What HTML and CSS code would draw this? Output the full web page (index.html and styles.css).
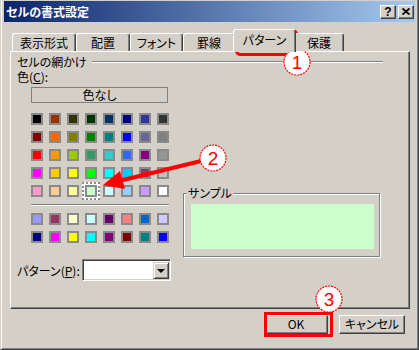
FILE: index.html
```html
<!DOCTYPE html>
<html>
<head>
    <meta charset="utf-8">
    <link rel="stylesheet" href="styles.css">
</head>
<body>
    <div class="window">
        <div class="titlebar">
            <span class="title">セルの書式設定</span>
            <div class="caption-btns">
                <span class="cbtn help">?</span>
                <span class="cbtn">
                    <svg width="8" height="7" viewBox="0 0 8 7"><path d="M0.5 0.5 L7.5 6.5 M7.5 0.5 L0.5 6.5" stroke="#000" stroke-width="1.8"/></svg>
                </span>
            </div>
        </div>

        <div class="content">
            <div class="tabs">
                <div class="tab tab-format">表示形式</div>
                <div class="tab tab-align">配置</div>
                <div class="tab tab-font">フォント</div>
                <div class="tab tab-border">罫線</div>
                <div class="tab tab-pattern active">パターン</div>
                <div class="tab tab-protect">保護</div>
            </div>

            <div class="panel">
                <div class="group-head">
                    <span>セルの網かけ</span>
                    <span class="rule"></span>
                </div>
                <div class="color-label">色(<u>C</u>):</div>

                <div class="row">
                    <div class="palettes">
                        <div class="none-btn">色なし</div>
                        <div class="palette main-colors">
                            <span class="sw" style="background:#000000"></span>
                            <span class="sw" style="background:#993300"></span>
                            <span class="sw" style="background:#333300"></span>
                            <span class="sw" style="background:#003300"></span>
                            <span class="sw" style="background:#003366"></span>
                            <span class="sw" style="background:#000080"></span>
                            <span class="sw" style="background:#333399"></span>
                            <span class="sw" style="background:#333333"></span>

                            <span class="sw" style="background:#800000"></span>
                            <span class="sw" style="background:#ff6600"></span>
                            <span class="sw" style="background:#808000"></span>
                            <span class="sw" style="background:#008000"></span>
                            <span class="sw" style="background:#008080"></span>
                            <span class="sw" style="background:#0000ff"></span>
                            <span class="sw" style="background:#666699"></span>
                            <span class="sw" style="background:#808080"></span>

                            <span class="sw" style="background:#ff0000"></span>
                            <span class="sw" style="background:#ff9900"></span>
                            <span class="sw" style="background:#99cc00"></span>
                            <span class="sw" style="background:#339966"></span>
                            <span class="sw" style="background:#33cccc"></span>
                            <span class="sw" style="background:#3366ff"></span>
                            <span class="sw" style="background:#800080"></span>
                            <span class="sw" style="background:#969696"></span>

                            <span class="sw" style="background:#ff00ff"></span>
                            <span class="sw" style="background:#ffcc00"></span>
                            <span class="sw" style="background:#ffff00"></span>
                            <span class="sw" style="background:#00ff00"></span>
                            <span class="sw" style="background:#00ffff"></span>
                            <span class="sw" style="background:#00ccff"></span>
                            <span class="sw" style="background:#993366"></span>
                            <span class="sw" style="background:#c0c0c0"></span>

                            <span class="sw" style="background:#ff99cc"></span>
                            <span class="sw" style="background:#ffcc99"></span>
                            <span class="sw" style="background:#ffff99"></span>
                            <span class="sw selected" style="background:#ccffcc"></span>
                            <span class="sw" style="background:#ccffff"></span>
                            <span class="sw" style="background:#99ccff"></span>
                            <span class="sw" style="background:#cc99ff"></span>
                            <span class="sw" style="background:#ffffff"></span>
                        </div>
                        <div class="sep"></div>
                        <div class="palette chart-colors">
                            <span class="sw" style="background:#9999ff"></span>
                            <span class="sw" style="background:#993366"></span>
                            <span class="sw" style="background:#ffffcc"></span>
                            <span class="sw" style="background:#ccffff"></span>
                            <span class="sw" style="background:#660066"></span>
                            <span class="sw" style="background:#ff8080"></span>
                            <span class="sw" style="background:#0066cc"></span>
                            <span class="sw" style="background:#ccccff"></span>

                            <span class="sw" style="background:#000080"></span>
                            <span class="sw" style="background:#ff00ff"></span>
                            <span class="sw" style="background:#ffff00"></span>
                            <span class="sw" style="background:#00ffff"></span>
                            <span class="sw" style="background:#800080"></span>
                            <span class="sw" style="background:#800000"></span>
                            <span class="sw" style="background:#008080"></span>
                            <span class="sw" style="background:#0000ff"></span>
                        </div>
                    </div>

                    <div class="sample">
                        <span class="legend">サンプル</span>
                        <div class="sample-box"></div>
                    </div>
                </div>

                <div class="pattern-row">
                    <span class="pattern-label">パターン(<u>P</u>):</span>
                    <div class="combo">
                        <span class="combo-btn"><span class="arrow"></span></span>
                    </div>
                </div>
            </div>

            <div class="footer">
                <div class="btn btn-ok">OK</div>
                <div class="btn btn-cancel">キャンセル</div>
            </div>
        </div>

        <!-- 赤い注記 -->
        <svg class="marks" width="419" height="350" viewBox="0 0 419 350">
            <rect x="235.5" y="30.5" width="60" height="24" rx="4" fill="none" stroke="#ff0000" stroke-width="3"/>
            <circle cx="296" cy="62" r="13" fill="#fff" stroke="#ff0000" stroke-width="1.2" stroke-dasharray="2 1"/>
            <text x="296" y="69" class="num">1</text>

            <line x1="200" y1="161" x2="118" y2="181" stroke="#ff0000" stroke-width="4"/>
            <polygon points="102,185 119,171 124,189" fill="#ff0000"/>
            <circle cx="212" cy="158" r="13" fill="#fff" stroke="#ff0000" stroke-width="1.2" stroke-dasharray="2 1"/>
            <text x="212" y="165" class="num">2</text>

            <rect x="264.5" y="313.5" width="66" height="22" fill="none" stroke="#ff0000" stroke-width="3"/>
            <circle cx="328" cy="299" r="13" fill="#fff" stroke="#ff0000" stroke-width="1.2" stroke-dasharray="2 1"/>
            <text x="328" y="306" class="num">3</text>
        </svg>
    </div>
</body>
</html>
```

FILE: styles.css
```css
body {
    margin: 0;
    font-family: "Noto Sans CJK JP", sans-serif;
    font-size: 12px;
    font-feature-settings: "palt";
    color: #000;
    background: #d4d0c8;
}
.window {
    position: relative;
    width: 419px;
    height: 350px;
    box-sizing: border-box;
    background: #d4d0c8;
    border: 1px solid;
    border-top: 0;
    border-color: #d4d0c8 #404040 #404040 #d4d0c8;
    box-shadow: inset 1px 0 #fff, inset -1px -1px #808080;
    padding: 1px 3px 2px 3px;
    display: flex;
    flex-direction: column;
}
.titlebar {
    height: 21px;
    background: linear-gradient(to right, #0a246a, #a6caf0);
    display: flex;
    align-items: center;
    padding: 0 1px 0 1px;
}
.title {
    flex: 1;
    color: #fff;
    font-weight: bold;
    font-size: 12px;
    padding-left: 1px;
    line-height: 14px;
}
.caption-btns {
    display: flex;
    gap: 2px;
}
.cbtn {
    width: 16px;
    height: 14px;
    box-sizing: border-box;
    background: #d4d0c8;
    border: 1px solid;
    border-color: #fff #404040 #404040 #fff;
    box-shadow: inset -1px -1px #808080;
    display: flex;
    align-items: center;
    justify-content: center;
}
.cbtn.help {
    font: bold 12px "Liberation Sans", sans-serif;
    line-height: 12px;
}
.content {
    padding: 7px 5px 0 6px;
}
.tabs {
    display: flex;
    align-items: flex-end;
    height: 22px;
    padding-left: 2px;
    position: relative;
    z-index: 1;
}
.tab {
    height: 18px;
    box-sizing: border-box;
    background: #d4d0c8;
    border-top: 1px solid #fff;
    border-left: 1px solid #fff;
    border-right: 1px solid #404040;
    box-shadow: inset -1px 0 #808080;
    border-radius: 3px 3px 0 0;
    text-align: center;
    line-height: 14px;
    padding-top: 2px;
    white-space: nowrap;
}
.tab-format { width: 64px; }
.tab-align { width: 54px; }
.tab-font { width: 53px; }
.tab-border { width: 52px; }
.tab-pattern { width: 59px; }
.tab-protect { width: 50px; }
.tab.active {
    width: 63px;
    height: 23px;
    margin: 0 -2px -1px -2px;
    padding-top: 3px;
    position: relative;
}
.panel {
    height: 258px;
    box-sizing: border-box;
    border: 1px solid;
    border-color: #fff #404040 #404040 #fff;
    box-shadow: inset -1px -1px #808080;
    padding: 3px 0 0 6px;
}
.group-head {
    display: flex;
    align-items: center;
    height: 13px;
    line-height: 13px;
    margin-right: 26px;
}
.rule {
    flex: 1;
    margin-left: 5px;
    margin-top: 1px;
    border-top: 1px solid #808080;
    border-bottom: 1px solid #fff;
}
.color-label {
    margin-top: 3px;
    line-height: 12px;
    height: 12px;
}
.row {
    display: flex;
    margin-top: 4px;
}
.palettes {
    margin-left: 14px;
    width: 138px;
}
.none-btn {
    height: 16px;
    box-sizing: border-box;
    width: 137px;
    border: 1px solid #808080;
    text-align: center;
    line-height: 13px;
}
.palette {
    display: grid;
    grid-template-columns: repeat(8, 12px);
    gap: 6px;
}
.main-colors {
    margin-top: 10px;
}
.chart-colors {
    margin-top: 7px;
}
.sw {
    width: 12px;
    height: 12px;
    box-sizing: border-box;
    border: 2px solid #8a8a8a;
}
.sw.selected {
    box-shadow: 0 0 0 3px #fff;
    outline: 2px dotted #8a8a8a;
    outline-offset: 1px;
}
.sep {
    margin-top: 7px;
    width: 138px;
    border-top: 1px solid #808080;
    border-bottom: 1px solid #fff;
}
.sample {
    margin: 106px 0 0 14px;
    width: 197px;
    height: 64px;
    box-sizing: border-box;
    border: 1px solid #808080;
    box-shadow: inset 1px 1px #fff, 1px 1px #fff;
}
.legend {
    display: block;
    width: fit-content;
    margin: -7px 0 0 3px;
    padding: 0 1px;
    background: #d4d0c8;
    line-height: 12px;
    height: 12px;
}
.sample-box {
    margin: 5px 0 0 7px;
    width: 183px;
    height: 45px;
    background: #ccffcc;
}
.pattern-row {
    display: flex;
    align-items: center;
    margin-top: 2px;
}
.pattern-label {
    width: 65px;
    flex-shrink: 0;
    white-space: nowrap;
}
.combo {
    width: 89px;
    height: 22px;
    box-sizing: border-box;
    border: 1px solid;
    border-color: #808080 #fff #fff #808080;
    box-shadow: inset 1px 1px #404040, inset -1px -1px #d4d0c8;
    background: #fff;
    display: flex;
    justify-content: flex-end;
    padding: 2px 1px 1px 2px;
}
.combo-btn {
    width: 16px;
    height: 17px;
    box-sizing: border-box;
    background: #d4d0c8;
    border: 1px solid;
    border-color: #d4d0c8 #404040 #404040 #d4d0c8;
    box-shadow: inset 1px 1px #fff, inset -1px -1px #808080;
    display: flex;
    align-items: center;
    justify-content: center;
}
.arrow {
    width: 0;
    height: 0;
    border-left: 4px solid transparent;
    border-right: 4px solid transparent;
    border-top: 4px solid #000;
}
.footer {
    display: flex;
    justify-content: flex-end;
    gap: 11px;
    margin-top: 6px;
    padding-right: 5px;
}
.btn {
    height: 19px;
    box-sizing: border-box;
    background: #d4d0c8;
    border: 1px solid;
    border-color: #fff #404040 #404040 #fff;
    box-shadow: inset -1px -1px #808080;
    text-align: center;
    line-height: 16px;
}
.btn-ok { width: 64px; }
.btn-cancel { width: 66px; }
.marks {
    position: absolute;
    left: 0;
    top: 0;
    pointer-events: none;
}
.num {
    font-family: "Liberation Sans", sans-serif;
    font-size: 19px;
    fill: #ff0000;
    text-anchor: middle;
}
```
